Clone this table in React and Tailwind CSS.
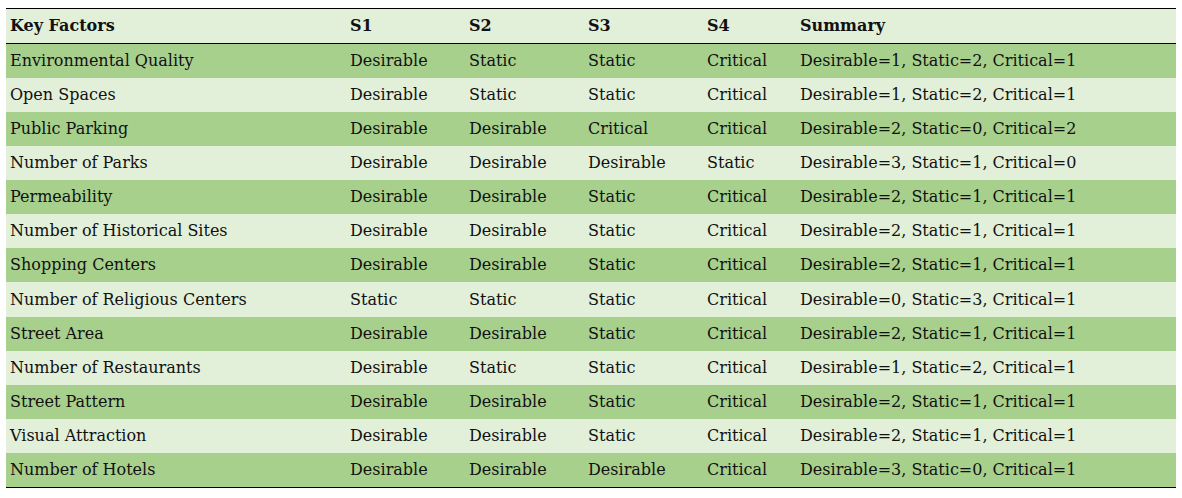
const ROWS = [
  ['Environmental Quality', 'Desirable', 'Static', 'Static', 'Critical', 'Desirable=1, Static=2, Critical=1'],
  ['Open Spaces', 'Desirable', 'Static', 'Static', 'Critical', 'Desirable=1, Static=2, Critical=1'],
  ['Public Parking', 'Desirable', 'Desirable', 'Critical', 'Critical', 'Desirable=2, Static=0, Critical=2'],
  ['Number of Parks', 'Desirable', 'Desirable', 'Desirable', 'Static', 'Desirable=3, Static=1, Critical=0'],
  ['Permeability', 'Desirable', 'Desirable', 'Static', 'Critical', 'Desirable=2, Static=1, Critical=1'],
  ['Number of Historical Sites', 'Desirable', 'Desirable', 'Static', 'Critical', 'Desirable=2, Static=1, Critical=1'],
  ['Shopping Centers', 'Desirable', 'Desirable', 'Static', 'Critical', 'Desirable=2, Static=1, Critical=1'],
  ['Number of Religious Centers', 'Static', 'Static', 'Static', 'Critical', 'Desirable=0, Static=3, Critical=1'],
  ['Street Area', 'Desirable', 'Desirable', 'Static', 'Critical', 'Desirable=2, Static=1, Critical=1'],
  ['Number of Restaurants', 'Desirable', 'Static', 'Static', 'Critical', 'Desirable=1, Static=2, Critical=1'],
  ['Street Pattern', 'Desirable', 'Desirable', 'Static', 'Critical', 'Desirable=2, Static=1, Critical=1'],
  ['Visual Attraction', 'Desirable', 'Desirable', 'Static', 'Critical', 'Desirable=2, Static=1, Critical=1'],
  ['Number of Hotels', 'Desirable', 'Desirable', 'Desirable', 'Critical', 'Desirable=3, Static=0, Critical=1'],
];

const HEADERS = ['Key Factors', 'S1', 'S2', 'S3', 'S4', 'Summary'];
const WIDTHS = ['w-[340px]', 'w-[119px]', 'w-[119px]', 'w-[119px]', 'w-[93px]', 'w-[380px]'];

export default function App() {
  return (
    <div className="bg-white w-[1182px] h-[498px] pt-2 pl-[6px]">
      <table
        className="w-[1170px] border-collapse table-fixed text-[#111] text-[16px]"
        style={{ fontFamily: '"DejaVu Serif", "Liberation Serif", serif' }}
      >
        <colgroup>
          {WIDTHS.map((w, i) => (
            <col key={i} className={w} />
          ))}
        </colgroup>
        <thead>
          <tr className="bg-[#e2efd9] border-t border-b border-black h-[35px]">
            {HEADERS.map((h) => (
              <th key={h} className="text-left font-bold px-1 align-middle">
                {h}
              </th>
            ))}
          </tr>
        </thead>
        <tbody>
          {ROWS.map((row, i) => (
            <tr
              key={row[0]}
              className={`h-[34.15px] ${i % 2 === 0 ? 'bg-[#a8d08d]' : 'bg-[#e2efd9]'} ${
                i === ROWS.length - 1 ? 'border-b border-black' : ''
              }`}
            >
              {row.map((cell, j) => (
                <td key={j} className="px-1 align-middle whitespace-nowrap">
                  {cell}
                </td>
              ))}
            </tr>
          ))}
        </tbody>
      </table>
    </div>
  );
}
